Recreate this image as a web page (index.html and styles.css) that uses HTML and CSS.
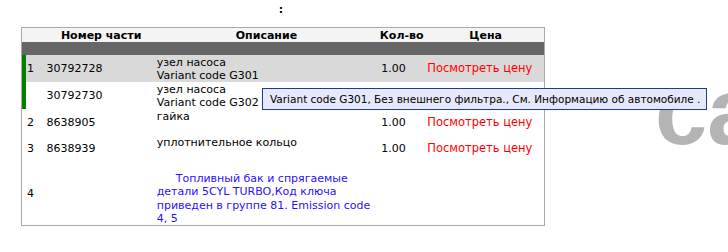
FILE: index.html
```html
<!DOCTYPE html>
<html>
<head>
<meta charset="utf-8">
<link rel="stylesheet" href="styles.css">
</head>
<body>
<div class="page">
  <div class="title">:</div>
  <table class="parts">
    <colgroup>
      <col class="c-num"><col class="c-part"><col class="c-desc"><col class="c-qty"><col class="c-price">
    </colgroup>
    <thead>
      <tr class="head">
        <th></th><th class="h-part">Номер части</th><th>Описание</th><th>Кол-во</th><th class="h-price">Цена</th>
      </tr>
      <tr class="dark"><td colspan="5"></td></tr>
    </thead>
    <tbody>
      <tr class="row sel">
        <td class="num mark">1</td>
        <td>30792728</td>
        <td class="desc">узел насоса<br>Variant code G301</td>
        <td>1.00</td>
        <td class="price">Посмотреть цену</td>
      </tr>
      <tr class="row">
        <td class="num mark"></td>
        <td>30792730</td>
        <td class="desc">узел насоса<br>Variant code G302</td>
        <td></td>
        <td></td>
      </tr>
      <tr class="row">
        <td class="num">2</td>
        <td>8638905</td>
        <td class="desc">гайка</td>
        <td>1.00</td>
        <td class="price">Посмотреть цену</td>
      </tr>
      <tr class="row">
        <td class="num">3</td>
        <td>8638939</td>
        <td class="desc">уплотнительное кольцо</td>
        <td>1.00</td>
        <td class="price">Посмотреть цену</td>
      </tr>
      <tr class="row group">
        <td class="num">4</td>
        <td></td>
        <td class="desc note"><span class="indent"></span>Топливный бак и спрягаемые детали 5CYL TURBO,Код ключа приведен в группе 81. Emission code 4, 5</td>
        <td></td>
        <td></td>
      </tr>
    </tbody>
  </table>
  <div class="tooltip">Variant code G301, Без внешнего фильтра., См. Информацию об автомобиле .</div>
</div>
<div class="watermark">ca</div>
</body>
</html>
```
FILE: styles.css
```css
html, body {
  margin: 0;
  padding: 0;
  background: #fff;
  overflow: hidden;
}
body {
  width: 728px;
  height: 252px;
  position: relative;
  font-family: "DejaVu Sans", Verdana, sans-serif;
  font-size: 11px;
  color: #000;
}
.page {
  padding: 3px 0 0 21px;
  width: 524px;
  position: relative;
  z-index: 1;
}
.title {
  text-align: center;
  font-weight: bold;
  height: 24px;
  line-height: 13px;
  padding-right: 4px;
}
.parts {
  border-collapse: collapse;
  border: 1px solid #a9a9a9;
  table-layout: fixed;
  width: 524px;
}
.c-num { width: 22px; }
.c-part { width: 111px; }
.c-desc { width: 223px; }
.c-qty { width: 47px; }
.c-price { width: 119px; }
.parts th, .parts td {
  padding: 0;
}
.head th {
  background: #f4f4f4;
  height: 14px;
  line-height: 13px;
  font-weight: bold;
  text-align: center;
  color: #000;
}
.head th.h-part { padding-left: 4px; }
.head th.h-price { padding-left: 2px; }
.dark td {
  background: #666;
  height: 13px;
}
.row { height: 26px; }
.row td {
  vertical-align: middle;
  line-height: 13px;
  padding-left: 3px;
}
.row td.num { padding-left: 5px; }
.row td.mark { box-shadow: inset 4px 0 0 #008000; }
.row.sel td { background: #d9d9d9; }
.row td.desc {
  vertical-align: top;
  padding-left: 2px;
  padding-top: 1px;
}
.row td.price {
  color: #ff0000;
  padding-left: 2px;
  font-size: 11.5px;
}
.row.group { height: 64px; }
.row.group td.desc {
  color: #2a10ff;
  padding-top: 11px;
  line-height: 13.25px;
  height: 53px;
  overflow: hidden;
}
.indent {
  display: inline-block;
  width: 19px;
}
.tooltip {
  position: absolute;
  left: 262px;
  top: 88px;
  box-sizing: border-box;
  height: 22px;
  padding: 0 6px 0 7px;
  line-height: 20px;
  background: #e6e8fb;
  border: 1px solid #1e3a8f;
  color: #000;
  white-space: nowrap;
  font-size: 10.5px;
}
.watermark {
  position: absolute;
  left: 655px;
  top: 65px;
  font-family: "Liberation Sans", Arial, sans-serif;
  font-weight: bold;
  font-size: 94px;
  line-height: 1;
  color: #b4b4b4;
  z-index: 0;
}
```
